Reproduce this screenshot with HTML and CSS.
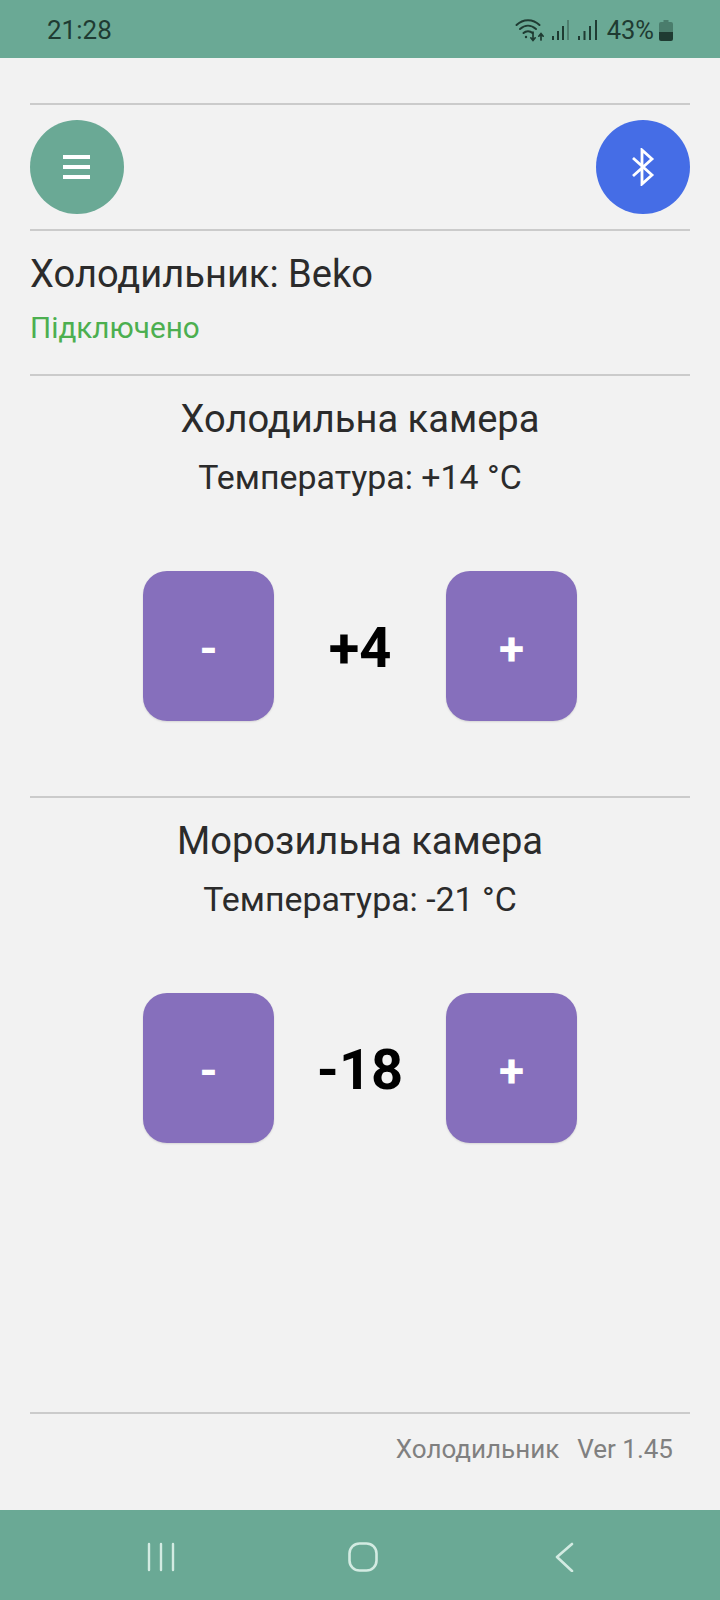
FILE: index.html
```html
<!DOCTYPE html>
<html>

<head>
    <title>Холодильник</title>
    <link rel="stylesheet" href="styles.css">
</head>

<body>
    <div class="status-bar">
        <span class="clock">21:28</span>
        <div class="status-icons">
            <svg class="wifi" width="30" height="24" viewBox="0 0 30 24" fill="none" stroke="#1f3b32" stroke-linecap="round">
                <path d="M1.5 7 C8 0.5 18 0.5 24.5 7" stroke-width="2" />
                <path d="M5 11 C10 6.5 16 6.5 21 11" stroke-width="2" />
                <path d="M8.5 15 C11 12.5 15 12.5 17.5 15" stroke-width="2" />
                <circle cx="11" cy="19" r="1.2" fill="#1f3b32" stroke="none" />
                <path d="M18 14 V22 M15.8 19.8 L18 22.4 L20.2 19.8" stroke-width="1.7" />
                <path d="M26 22 V16 M23.8 18.2 L26 15.6 L28.2 18.2" stroke-width="1.7" />
            </svg>
            <svg class="signal-one" width="17" height="20" viewBox="0 0 17 20" stroke="#1f3b32" stroke-width="2">
                <path d="M1 20 V16 M6 20 V11 M11 20 V6" />
                <path d="M16 20 V0" stroke="#4f7f6f" />
            </svg>
            <svg class="signal-two" width="19" height="20" viewBox="0 0 19 20" stroke="#1f3b32" stroke-width="2">
                <path d="M1 20 V16 M6.5 20 V11 M12 20 V6 M18 20 V0" />
            </svg>
            <span class="battery-text">43%</span>
            <svg class="battery" width="14" height="21" viewBox="0 0 14 21">
                <path d="M4.5 0 H9.5 V2 H12 Q14 2 14 4 V12 H0 V4 Q0 2 2 2 H4.5 Z" fill="#4a7d6c" />
                <path d="M0 12 H14 V19 Q14 21 12 21 H2 Q0 21 0 19 Z" fill="#1f3b32" />
            </svg>
        </div>
    </div>

    <div class="content">
        <hr class="first">
        <div class="top-buttons">
            <div class="round-btn menu-btn">
                <svg width="28" height="24" viewBox="0 0 28 24" fill="#fff">
                    <rect x="0" y="0" width="27" height="4" />
                    <rect x="0" y="10" width="27" height="4" />
                    <rect x="0" y="20" width="27" height="4" />
                </svg>
            </div>
            <div class="round-btn bt-btn">
                <svg width="24" height="38" viewBox="0 0 24 38" fill="none" stroke="#fff" stroke-width="2.8">
                    <path d="M2 10 L21 27 L11 36 V2 L21 11 L2 28" />
                </svg>
            </div>
        </div>
        <hr>
        <div class="device">
            <div class="device-name">Холодильник: Beko</div>
            <div class="device-state">Підключено</div>
        </div>
        <hr>
        <div class="chamber">
            <div class="chamber-title">Холодильна камера</div>
            <div class="chamber-temp">Температура: +14 °C</div>
            <div class="controls">
                <div class="step-btn">-</div>
                <div class="set-value">+4</div>
                <div class="step-btn">+</div>
            </div>
        </div>
        <hr>
        <div class="chamber">
            <div class="chamber-title">Морозильна камера</div>
            <div class="chamber-temp">Температура: -21 °C</div>
            <div class="controls">
                <div class="step-btn">-</div>
                <div class="set-value">-18</div>
                <div class="step-btn">+</div>
            </div>
        </div>
        <div class="spacer"></div>
        <hr>
        <div class="footer">
            <span>Холодильник</span>
            <span>Ver 1.45</span>
        </div>
    </div>

    <div class="nav-bar">
        <svg width="30" height="30" viewBox="0 0 30 30" stroke="#d3ebe2" stroke-width="2.4" stroke-linecap="round">
            <path d="M3 2 V28 M15 2 V28 M27 2 V28" />
        </svg>
        <svg class="nav-home" width="30" height="30" viewBox="0 0 30 30" fill="none" stroke="#d3ebe2" stroke-width="2.6">
            <rect x="1.5" y="1.5" width="27" height="27" rx="10" />
        </svg>
        <svg width="20" height="30" viewBox="0 0 20 30" fill="none" stroke="#d3ebe2" stroke-width="2.6" stroke-linecap="round" stroke-linejoin="round">
            <path d="M18 2 L3 15 L18 29" />
        </svg>
    </div>
</body>

</html>
```

FILE: styles.css
```css
* {
    box-sizing: border-box;
}

html,
body {
    height: 100%;
    margin: 0;
}

body {
    display: flex;
    flex-direction: column;
    background-color: #f2f2f2;
    font-family: Roboto, "Noto Sans", sans-serif;
    color: #2b2b2b;
}

/* Status bar */
.status-bar {
    height: 58px;
    background-color: #6aa995;
    display: flex;
    justify-content: space-between;
    align-items: center;
    padding: 2px 47px 0 47px;
    color: #1f3b32;
}

.clock {
    font-size: 26px;
}

.status-icons {
    display: flex;
    align-items: center;
}

.signal-one {
    margin-left: 7px;
}

.signal-two {
    margin-left: 9px;
}

.battery-text {
    font-size: 25.5px;
    margin-left: 10px;
}

.battery {
    margin-left: 5px;
}

/* Main content */
.content {
    flex: 1;
    display: flex;
    flex-direction: column;
    padding: 0 30px;
}

hr {
    width: 100%;
    height: 2px;
    margin: 0;
    border: 0;
    background-color: #cbcbcb;
}

hr.first {
    margin-top: 45px;
}

.top-buttons {
    display: flex;
    justify-content: space-between;
    padding: 15px 0;
}

.round-btn {
    width: 94px;
    height: 94px;
    border-radius: 50%;
    display: flex;
    align-items: center;
    justify-content: center;
}

.menu-btn {
    background-color: #6aa995;
}

.bt-btn {
    background-color: #456de6;
}

.device {
    height: 143px;
    padding-top: 19px;
}

.device-name {
    font-size: 38.1px;
    line-height: 48px;
}

.device-state {
    font-size: 29.7px;
    line-height: 36px;
    margin-top: 12px;
    color: #4caf50;
}

.chamber {
    height: 420px;
    padding-top: 19px;
    text-align: center;
}

.chamber-title {
    font-size: 38.1px;
    line-height: 48px;
}

.chamber-temp {
    font-size: 33.9px;
    line-height: 42px;
    margin-top: 14px;
}

.controls {
    display: flex;
    justify-content: center;
    align-items: center;
    margin-top: 72px;
}

.step-btn {
    width: 131px;
    height: 150px;
    padding-top: 6px;
    border-radius: 24px;
    background-color: #866fbc;
    box-shadow: 0 1px 2px rgba(0, 0, 0, 0.12);
    color: #fff;
    font-size: 46px;
    font-weight: 700;
    display: flex;
    align-items: center;
    justify-content: center;
}

.set-value {
    width: 172px;
    padding-top: 3px;
    text-align: center;
    font-size: 56px;
    font-weight: 700;
    color: #000;
}

.spacer {
    flex: 1;
}

.footer {
    display: flex;
    justify-content: flex-end;
    gap: 18px;
    padding: 18px 17px 0 0;
    font-size: 26px;
    line-height: 34px;
    height: 96px;
    color: #808080;
}

/* Bottom navigation */
.nav-bar {
    height: 90px;
    background-color: #6aa995;
    display: flex;
    align-items: center;
    padding: 3px 0 0 146px;
}

.nav-home {
    margin: 0 176px 0 172px;
}
```
